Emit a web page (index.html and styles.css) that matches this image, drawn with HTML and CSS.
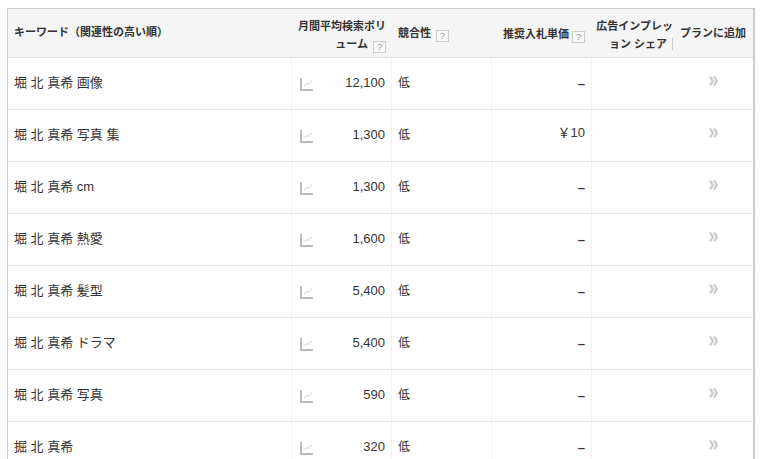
FILE: index.html
```html
<!DOCTYPE html>
<html lang="ja">
<head>
<meta charset="utf-8">
<title>キーワード</title>
<link rel="stylesheet" href="styles.css">
</head>
<body>
<div class="table">
  <div class="row head">
    <div class="cell h-key">キーワード（関連性の高い順）</div>
    <div class="cell h-vol">月間平均検索ボリ<br>ューム <span class="q">?</span></div>
    <div class="cell h-comp">競合性 <span class="q">?</span></div>
    <div class="cell h-bid">推奨入札単価 <span class="q">?</span></div>
    <div class="cell h-share">広告インプレッ<br>ョン シェア<span class="sep"></span></div>
    <div class="cell h-add">プランに追加</div>
  </div>
  <div class="row"><div class="cell key">堀 北 真希 画像</div><div class="cell vol"><svg class="chart" viewBox="0 0 13 13"><path d="M1 0v12H13" fill="none" stroke="#bbb" stroke-width="2"/><path d="M4 8l2.500-2.500 1.500 1 4-3.500" fill="none" stroke="#ccc" stroke-width="1"/></svg><span>12,100</span></div><div class="cell comp">低</div><div class="cell bid dash">–</div><div class="cell share"></div><div class="cell add"><svg class="arrows" viewBox="0 0 9 10"><path d="M1 .5l3 4.500-3 4.500M5 .5l3 4.500-3 4.500" fill="none" stroke="#ccc" stroke-width="2.300"/></svg></div></div>
  <div class="row"><div class="cell key">堀 北 真希 写真 集</div><div class="cell vol"><svg class="chart" viewBox="0 0 13 13"><path d="M1 0v12H13" fill="none" stroke="#bbb" stroke-width="2"/><path d="M4 8l2.500-2.500 1.500 1 4-3.500" fill="none" stroke="#ccc" stroke-width="1"/></svg><span>1,300</span></div><div class="cell comp">低</div><div class="cell bid">￥10</div><div class="cell share"></div><div class="cell add"><svg class="arrows" viewBox="0 0 9 10"><path d="M1 .5l3 4.500-3 4.500M5 .5l3 4.500-3 4.500" fill="none" stroke="#ccc" stroke-width="2.300"/></svg></div></div>
  <div class="row"><div class="cell key">堀 北 真希 cm</div><div class="cell vol"><svg class="chart" viewBox="0 0 13 13"><path d="M1 0v12H13" fill="none" stroke="#bbb" stroke-width="2"/><path d="M4 8l2.500-2.500 1.500 1 4-3.500" fill="none" stroke="#ccc" stroke-width="1"/></svg><span>1,300</span></div><div class="cell comp">低</div><div class="cell bid dash">–</div><div class="cell share"></div><div class="cell add"><svg class="arrows" viewBox="0 0 9 10"><path d="M1 .5l3 4.500-3 4.500M5 .5l3 4.500-3 4.500" fill="none" stroke="#ccc" stroke-width="2.300"/></svg></div></div>
  <div class="row"><div class="cell key">堀 北 真希 熱愛</div><div class="cell vol"><svg class="chart" viewBox="0 0 13 13"><path d="M1 0v12H13" fill="none" stroke="#bbb" stroke-width="2"/><path d="M4 8l2.500-2.500 1.500 1 4-3.500" fill="none" stroke="#ccc" stroke-width="1"/></svg><span>1,600</span></div><div class="cell comp">低</div><div class="cell bid dash">–</div><div class="cell share"></div><div class="cell add"><svg class="arrows" viewBox="0 0 9 10"><path d="M1 .5l3 4.500-3 4.500M5 .5l3 4.500-3 4.500" fill="none" stroke="#ccc" stroke-width="2.300"/></svg></div></div>
  <div class="row"><div class="cell key">堀 北 真希 髪型</div><div class="cell vol"><svg class="chart" viewBox="0 0 13 13"><path d="M1 0v12H13" fill="none" stroke="#bbb" stroke-width="2"/><path d="M4 8l2.500-2.500 1.500 1 4-3.500" fill="none" stroke="#ccc" stroke-width="1"/></svg><span>5,400</span></div><div class="cell comp">低</div><div class="cell bid dash">–</div><div class="cell share"></div><div class="cell add"><svg class="arrows" viewBox="0 0 9 10"><path d="M1 .5l3 4.500-3 4.500M5 .5l3 4.500-3 4.500" fill="none" stroke="#ccc" stroke-width="2.300"/></svg></div></div>
  <div class="row"><div class="cell key">堀 北 真希 ドラマ</div><div class="cell vol"><svg class="chart" viewBox="0 0 13 13"><path d="M1 0v12H13" fill="none" stroke="#bbb" stroke-width="2"/><path d="M4 8l2.500-2.500 1.500 1 4-3.500" fill="none" stroke="#ccc" stroke-width="1"/></svg><span>5,400</span></div><div class="cell comp">低</div><div class="cell bid dash">–</div><div class="cell share"></div><div class="cell add"><svg class="arrows" viewBox="0 0 9 10"><path d="M1 .5l3 4.500-3 4.500M5 .5l3 4.500-3 4.500" fill="none" stroke="#ccc" stroke-width="2.300"/></svg></div></div>
  <div class="row"><div class="cell key">堀 北 真希 写真</div><div class="cell vol"><svg class="chart" viewBox="0 0 13 13"><path d="M1 0v12H13" fill="none" stroke="#bbb" stroke-width="2"/><path d="M4 8l2.500-2.500 1.500 1 4-3.500" fill="none" stroke="#ccc" stroke-width="1"/></svg><span>590</span></div><div class="cell comp">低</div><div class="cell bid dash">–</div><div class="cell share"></div><div class="cell add"><svg class="arrows" viewBox="0 0 9 10"><path d="M1 .5l3 4.500-3 4.500M5 .5l3 4.500-3 4.500" fill="none" stroke="#ccc" stroke-width="2.300"/></svg></div></div>
  <div class="row"><div class="cell key">掘 北 真希</div><div class="cell vol"><svg class="chart" viewBox="0 0 13 13"><path d="M1 0v12H13" fill="none" stroke="#bbb" stroke-width="2"/><path d="M4 8l2.500-2.500 1.500 1 4-3.500" fill="none" stroke="#ccc" stroke-width="1"/></svg><span>320</span></div><div class="cell comp">低</div><div class="cell bid dash">–</div><div class="cell share"></div><div class="cell add"><svg class="arrows" viewBox="0 0 9 10"><path d="M1 .5l3 4.500-3 4.500M5 .5l3 4.500-3 4.500" fill="none" stroke="#ccc" stroke-width="2.300"/></svg></div></div>
</div>
</body>
</html>
```
FILE: styles.css
```css
html, body { height: 459px; overflow: hidden; }
body {
  margin: 0;
  padding: 8px 5px 0 7px;
  background: #fff;
  color: #333;
  font-family: "Liberation Sans", "Noto Sans CJK JP", sans-serif;
  font-size: 13px;
}
.table {
  border: 1px solid #ccc;
  border-right-width: 2px;
  border-bottom: 0;
  width: 748px;
  box-sizing: border-box;
}
.row {
  display: grid;
  grid-template-columns: 283px 100px 100px 100px 82px 80px;
  height: 52px;
  box-sizing: border-box;
  border-bottom: 1px solid #e5e5e5;
}
.head {
  height: 49px;
  background: #f5f5f5;
  font-size: 11px;
  font-weight: bold;
  line-height: 18px;
  color: #333;
  align-items: center;
}
.cell { box-sizing: border-box; padding: 0 6px; }
.row:not(.head) .cell { padding-top: 15px; }
.row:not(.head) .cell + .cell { border-left: 1px solid #f2f2f2; }
.row:not(.head) .share + .add { border-left: 0; }
.h-key { padding-bottom: 2px; }
.h-vol { text-align: right; padding: 3px 5px 0 6px; }
.h-comp { padding-left: 7px; }
.h-bid { text-align: right; padding-top: 2px; }
.h-bid .q { margin-left: 0; }
.h-share { text-align: right; padding: 3px 0 0 0; white-space: nowrap; }
.sep {
  display: inline-block;
  width: 1px;
  height: 12px;
  margin-left: 5px;
  background: #ccc;
  vertical-align: -2px;
}
.h-add { padding: 0 0 0 7px; white-space: nowrap; }
.q {
  display: inline-block;
  width: 11px;
  height: 10px;
  line-height: 10px;
  border: 1px solid #ccc;
  background: #f8f8f8;
  color: #999;
  font-size: 9px;
  font-weight: normal;
  text-align: center;
  vertical-align: -2px;
  margin-left: 2px;
  box-sizing: content-box;
}
.row:not(.head) .key { font-size: 13px; padding-top: 14px; }
.vol { display: flex; justify-content: space-between; align-items: flex-start; }
.vol span { line-height: 22px; font-size: 13px; margin-top: -1px; }
.chart { width: 13px; height: 13px; margin: 5px 0 0 2px; }
.comp { font-size: 12px; }
.row:not(.head) .comp { padding-left: 6px; padding-right: 0; }
.row:not(.head) .bid { text-align: right; line-height: 18px; padding-top: 14px; }
.row:not(.head) .dash { padding-top: 17px; font-weight: bold; }
.row:not(.head) .add { padding-left: 0; padding-right: 0; }
.arrows { display: block; width: 9px; height: 10px; margin: 3px auto 0; }
```
